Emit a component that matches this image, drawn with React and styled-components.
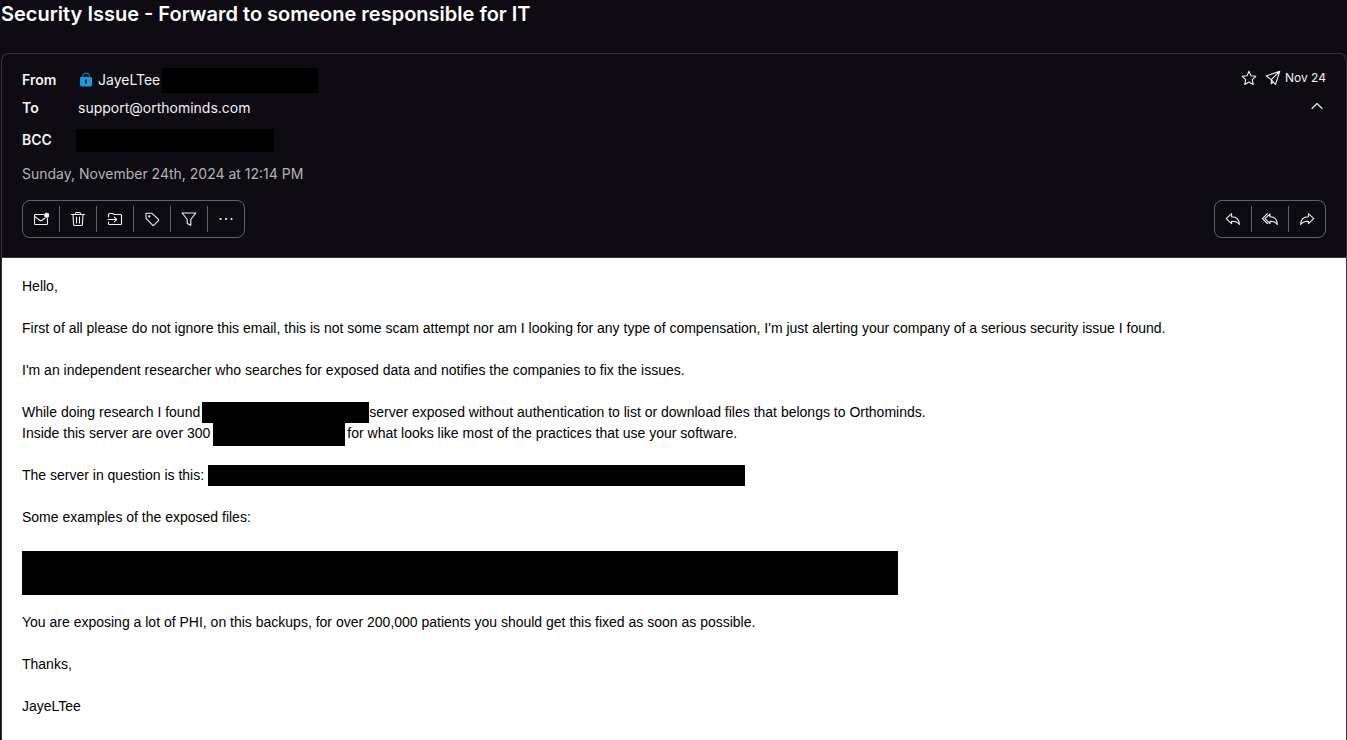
import * as React from "react";
import styled, { createGlobalStyle, ThemeProvider } from "styled-components";

const theme = {
  colors: {
    background: "#0e0b12",
    border: "#35323c",
    control: "#5c656c",
    text: "#f2f2f3",
    weak: "#b4b4b8",
    lock: "#109fdb"
  }
};

const GlobalStyle = createGlobalStyle`
  * {
    box-sizing: border-box;
  }
  body {
    margin: 0;
    background: ${theme.colors.background};
    color: ${theme.colors.text};
    font-family: Inter, sans-serif;
    font-size: 14px;
    line-height: 20px;
  }
`;

const Page = styled.main`
  display: flex;
  flex-direction: column;
  min-height: 100vh;
  padding-left: 1px;
`;

const Subject = styled.h1`
  margin: 0 0 25px;
  font-size: 20px;
  font-weight: 600;
  line-height: 28px;
  color: #fff;
`;

const Message = styled.article`
  display: flex;
  flex: 1;
  flex-direction: column;
  border: 1px solid ${({ theme }) => theme.colors.border};
  border-bottom: 0;
  border-radius: 8px 8px 0 0;
`;

const Header = styled.header`
  padding: 12px 20px 19px;
  border-bottom: 1px solid ${({ theme }) => theme.colors.border};
`;

const HeaderTop = styled.div`
  display: flex;
  justify-content: space-between;
`;

const Fields = styled.dl`
  margin: 0;
`;

const Field = styled.div`
  display: flex;
  align-items: center;
  height: 28px;
  margin-top: ${({ $spaced }) => ($spaced ? "4px" : "0")};
`;

const FieldName = styled.dt`
  width: 54px;
  font-weight: 600;
`;

const FieldValue = styled.dd`
  display: flex;
  align-items: center;
  margin: 0;
`;

const Address = styled.span`
  display: flex;
  align-items: center;
  gap: 4px;
  padding: 0 2px;
`;

const HeaderSide = styled.div`
  display: flex;
  flex-direction: column;
  align-items: flex-end;
`;

const Status = styled.div`
  display: flex;
  align-items: center;
  height: 24px;
  gap: 8px;
  font-size: 12px;
`;

const Sent = styled.span`
  display: flex;
  align-items: center;
  gap: 4px;
`;

const PlainButton = styled.button`
  display: flex;
  padding: 0;
  border: 0;
  background: none;
  color: inherit;
  cursor: pointer;
`;

const CollapseButton = styled(PlainButton)`
  margin-top: 8px;
  padding: 0 1px;
`;

const FullDate = styled.time`
  display: block;
  margin-top: 10px;
  color: ${({ theme }) => theme.colors.weak};
`;

const Toolbar = styled.div`
  display: flex;
  justify-content: space-between;
  margin-top: 16px;
`;

const ButtonGroup = styled.div`
  display: flex;
  align-items: center;
  height: 38px;
  border: 1px solid ${({ theme }) => theme.colors.control};
  border-radius: 8px;
`;

const ToolButton = styled.button`
  display: flex;
  align-items: center;
  justify-content: center;
  width: 37px;
  height: 26px;
  padding: 0;
  border: 0;
  border-right: 1px solid ${({ theme }) => theme.colors.control};
  background: none;
  color: inherit;
  cursor: pointer;
  &:last-child {
    width: 36px;
    border-right: 0;
  }
`;

const Body = styled.section`
  flex: 1;
  padding: 18px 20px 20px;
  background: #fff;
  color: #000;
  font-family: "Liberation Sans", Arial, sans-serif;
  line-height: 21px;
`;

const Paragraph = styled.p`
  margin: 0 0 21px;
`;

const Redacted = styled.span`
  display: inline-block;
  width: ${({ $width }) => $width}px;
  height: ${({ $height }) => $height || 21}px;
  background: #000;
  vertical-align: top;
`;

const RedactedWords = styled(Redacted)`
  margin: 0 ${({ $after }) => $after || 0}px -2px ${({ $before }) => $before || 0}px;
`;

const RedactedBlock = styled.div`
  max-width: 876px;
  height: 44px;
  margin: 23px 0 17px;
  background: #000;
`;

const Icon = ({ children, weight = 1.1 }) => (
  <svg
    width="16"
    height="16"
    viewBox="0 0 16 16"
    fill="none"
    stroke="currentColor"
    strokeWidth={weight}
    strokeLinecap="round"
    strokeLinejoin="round"
    aria-hidden="true">
    {children}
  </svg>
);

const LockIcon = () => (
  <svg width="16" height="16" viewBox="0 0 16 16" fill="none" aria-hidden="true">
    <path d="M4.5 5.5v-1a3.5 3.5 0 0 1 7 0v1" stroke={theme.colors.lock} />
    <rect x="2" y="5" width="12" height="9.5" rx="1.4" fill={theme.colors.lock} />
    <path d="M8 7.5v4" stroke={theme.colors.background} strokeWidth="1.8" />
  </svg>
);

const ReplyPath = () => (
  <path d="M1.2 7.6 6.6 2.7v3c4.7.1 7.8 2.7 7.8 7.8-1.7-2.2-4.1-3.2-7.8-3.2v2.4z" />
);

const leftActions = [
  {
    label: "Mark as unread",
    icon: (
      <>
        <path d="M10.5 3.5H2.5A1 1 0 0 0 1.5 4.5v8a1 1 0 0 0 1 1h11a1 1 0 0 0 1-1V7.5" />
        <path d="m2 5.7 4.7 3.5a2 2 0 0 0 2.4 0l2.6-2" />
        <circle cx="13.7" cy="4.2" r="2" fill="currentColor" />
      </>
    )
  },
  {
    label: "Move to trash",
    icon: (
      <>
        <path d="M1.5 3.5h13M5.5 3.3V2.5a1 1 0 0 1 1-1h3a1 1 0 0 1 1 1v.8" />
        <path d="m3 3.8.6 9.7a1 1 0 0 0 1 1h6.8a1 1 0 0 0 1-1l.6-9.7M6.5 6v6M9.5 6v6" />
      </>
    )
  },
  {
    label: "Move to",
    icon: (
      <>
        <path d="M1.5 6V3.5a1 1 0 0 1 1-1h3.2l1.5 1h6.3a1 1 0 0 1 1 1v8a1 1 0 0 1-1 1h-11a1 1 0 0 1-1-1V11" />
        <path d="M1 8.5h8.5M7.3 6.2l2.3 2.3-2.3 2.3" />
      </>
    )
  },
  {
    label: "Label as",
    icon: (
      <>
        <path d="M2 2.5v4.8l6.6 6.8a1 1 0 0 0 1.4 0l4.4-4.4a1 1 0 0 0 0-1.4L8 2.3H2.2z" />
        <circle cx="5.2" cy="5.4" r=".6" fill="currentColor" />
      </>
    )
  },
  { label: "Filter on", icon: <path d="M1.2 2h13.6L9.8 8.5v5.8l-3.6-1.8v-4z" /> },
  {
    label: "More",
    icon: (
      <g fill="currentColor" stroke="none">
        <circle cx="2.5" cy="8" r="1.1" />
        <circle cx="8" cy="8" r="1.1" />
        <circle cx="13.5" cy="8" r="1.1" />
      </g>
    )
  }
];

const rightActions = [
  { label: "Reply", icon: <ReplyPath /> },
  {
    label: "Reply all",
    icon: (
      <>
        <path d="M2.9 7.6 8 2.8v2.9c4.4.1 7.3 2.6 7.3 7.7-1.6-2.2-3.8-3.2-7.3-3.2v2.4z" />
        <path d="M5.4 2.7.4 7.6l5 4.9" />
      </>
    )
  },
  {
    label: "Forward",
    icon: (
      <g transform="matrix(-1 0 0 1 16 0)">
        <ReplyPath />
      </g>
    )
  }
];

const Actions = ({ items }) => (
  <ButtonGroup>
    {items.map(({ label, icon }) => (
      <ToolButton key={label} type="button" aria-label={label}>
        <Icon>{icon}</Icon>
      </ToolButton>
    ))}
  </ButtonGroup>
);

export const App = () => {
  return (
    <ThemeProvider theme={theme}>
      <GlobalStyle />
      <Page>
        <Subject>Security Issue - Forward to someone responsible for IT</Subject>
        <Message>
          <Header>
            <HeaderTop>
              <Fields>
                <Field>
                  <FieldName>From</FieldName>
                  <FieldValue>
                    <Address>
                      <LockIcon />
                      JayeLTee
                    </Address>
                    <Redacted $width={156} $height={25} />
                  </FieldValue>
                </Field>
                <Field>
                  <FieldName>To</FieldName>
                  <FieldValue>
                    <Address>support@orthominds.com</Address>
                  </FieldValue>
                </Field>
                <Field $spaced>
                  <FieldName>BCC</FieldName>
                  <FieldValue>
                    <Redacted $width={198} $height={23} />
                  </FieldValue>
                </Field>
              </Fields>
              <HeaderSide>
                <Status>
                  <PlainButton type="button" aria-label="Star">
                    <Icon>
                      <path d="m8 1.3 2 4.4 4.8.6-3.5 3.3.9 4.8L8 12l-4.2 2.4.9-4.8L1.2 6.3 6 5.7z" />
                    </Icon>
                  </PlainButton>
                  <Sent>
                    <Icon>
                      <path d="M1.2 6 14.7 1.3 10.5 14.5 6.3 9.6zM6.3 9.6l8.2-8.1M6.3 9.6v4.2l2-1.9" />
                    </Icon>
                    Nov 24
                  </Sent>
                </Status>
                <CollapseButton type="button" aria-label="Hide details">
                  <Icon>
                    <path d="m3 10.5 5-5 5 5" />
                  </Icon>
                </CollapseButton>
              </HeaderSide>
            </HeaderTop>
            <FullDate dateTime="2024-11-24T12:14">Sunday, November 24th, 2024 at 12:14 PM</FullDate>
            <Toolbar>
              <Actions items={leftActions} />
              <Actions items={rightActions} />
            </Toolbar>
          </Header>
          <Body>
            <Paragraph>Hello,</Paragraph>
            <Paragraph>
              First of all please do not ignore this email, this is not some scam attempt nor am I
              looking for any type of compensation, I'm just alerting your company of a serious
              security issue I found.
            </Paragraph>
            <Paragraph>
              I'm an independent researcher who searches for exposed data and notifies the companies
              to fix the issues.
            </Paragraph>
            <Paragraph>
              While doing research I found
              <RedactedWords $width={167} $before={2} />
              server exposed without authentication to list or download files that belongs to
              Orthominds.
              <br />
              Inside this server are over 300
              <RedactedWords $width={132} $height={23} $before={3} $after={2} />
              for what looks like most of the practices that use your software.
            </Paragraph>
            <Paragraph>
              The server in question is this: <RedactedWords $width={537} />
            </Paragraph>
            <Paragraph>Some examples of the exposed files:</Paragraph>
            <RedactedBlock />
            <Paragraph>
              You are exposing a lot of PHI, on this backups, for over 200,000 patients you should
              get this fixed as soon as possible.
            </Paragraph>
            <Paragraph>Thanks,</Paragraph>
            <Paragraph>JayeLTee</Paragraph>
          </Body>
        </Message>
      </Page>
    </ThemeProvider>
  );
};

export default App;
